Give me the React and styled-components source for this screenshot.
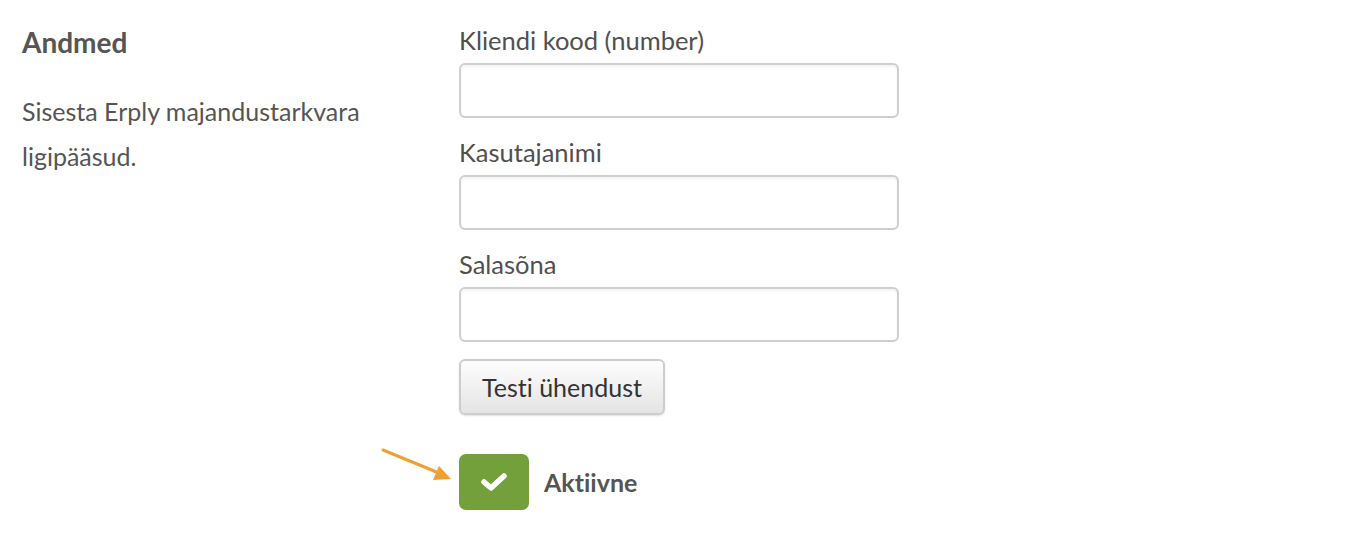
import React from "react";
import styled, { createGlobalStyle } from "styled-components";

const GlobalStyle = createGlobalStyle`
  body {
    margin: 0;
    background: #fff;
    font-family: Lato, "Open Sans", sans-serif;
    font-variant-ligatures: none;
  }
`;

const Page = styled.div`
  display: flex;
  padding: 24px 0 0 22px;
`;

const Intro = styled.aside`
  width: 437px;
  color: #555;
`;

const Title = styled.h2`
  margin: 0;
  font-size: 28px;
  line-height: 36px;
  font-weight: 700;
`;

const Lead = styled.p`
  margin: 29px 0 0;
  font-size: 25px;
  line-height: 45px;
  width: 380px;
`;

const Form = styled.div`
  display: flex;
  flex-direction: column;
  width: 440px;
`;

const Field = styled.div`
  display: flex;
  flex-direction: column;
  margin-bottom: 18px;
`;

const Label = styled.label`
  font-size: 25.5px;
  line-height: 32px;
  color: #505050;
  margin-bottom: 7px;
`;

const Input = styled.input`
  box-sizing: border-box;
  height: 55px;
  width: 440px;
  border: 2px solid #cfcfcf;
  border-radius: 6px;
  box-shadow: inset 0 2px 3px rgba(0, 0, 0, 0.05);
  outline: none;
`;

const Button = styled.button`
  align-self: flex-start;
  box-sizing: border-box;
  margin-top: -1px;
  height: 56px;
  width: 206px;
  border: 2px solid #cdcdcd;
  border-radius: 6px;
  background: linear-gradient(#fdfdfd, #e4e4e4);
  box-shadow: 0 1px 2px rgba(0, 0, 0, 0.12);
  color: #333;
  font-family: Lato, "Open Sans", sans-serif;
  font-variant-ligatures: none;
  font-size: 25px;
  padding: 0;
`;

const CheckRow = styled.div`
  position: relative;
  display: flex;
  align-items: center;
  gap: 15px;
  margin-top: 39px;
`;

const Check = styled.span`
  display: flex;
  align-items: center;
  justify-content: center;
  width: 70px;
  height: 56px;
  border-radius: 7px;
  background: #73a03a;
`;

const CheckLabel = styled.span`
  font-size: 25px;
  font-weight: 700;
  color: #555;
`;

const Arrow = styled.svg`
  position: absolute;
  left: -78px;
  top: -6px;
`;

export default function App() {
  return (
    <>
      <GlobalStyle />
      <Page>
        <Intro>
          <Title>Andmed</Title>
          <Lead>Sisesta Erply majandustarkvara ligipääsud.</Lead>
        </Intro>
        <Form>
          <Field>
            <Label>Kliendi kood (number)</Label>
            <Input />
          </Field>
          <Field>
            <Label>Kasutajanimi</Label>
            <Input />
          </Field>
          <Field>
            <Label>Salasõna</Label>
            <Input type="password" />
          </Field>
          <Button>Testi ühendust</Button>
          <CheckRow>
            <Arrow width="72" height="34" viewBox="0 0 72 34">
              <line x1="2" y1="2" x2="58" y2="25" stroke="#f0a033" strokeWidth="3" strokeLinecap="round" />
              <polygon points="70,31 52,32 58,18" fill="#f0a033" />
            </Arrow>
            <Check>
              <svg width="28" height="22" viewBox="0 0 28 22" style={{ filter: "blur(0.6px)" }}>
                <path d="M4 11 L11 17 L24 5" fill="none" stroke="#fff" strokeWidth="5.5" strokeLinecap="round" strokeLinejoin="round" />
              </svg>
            </Check>
            <CheckLabel>Aktiivne</CheckLabel>
          </CheckRow>
        </Form>
      </Page>
    </>
  );
}
